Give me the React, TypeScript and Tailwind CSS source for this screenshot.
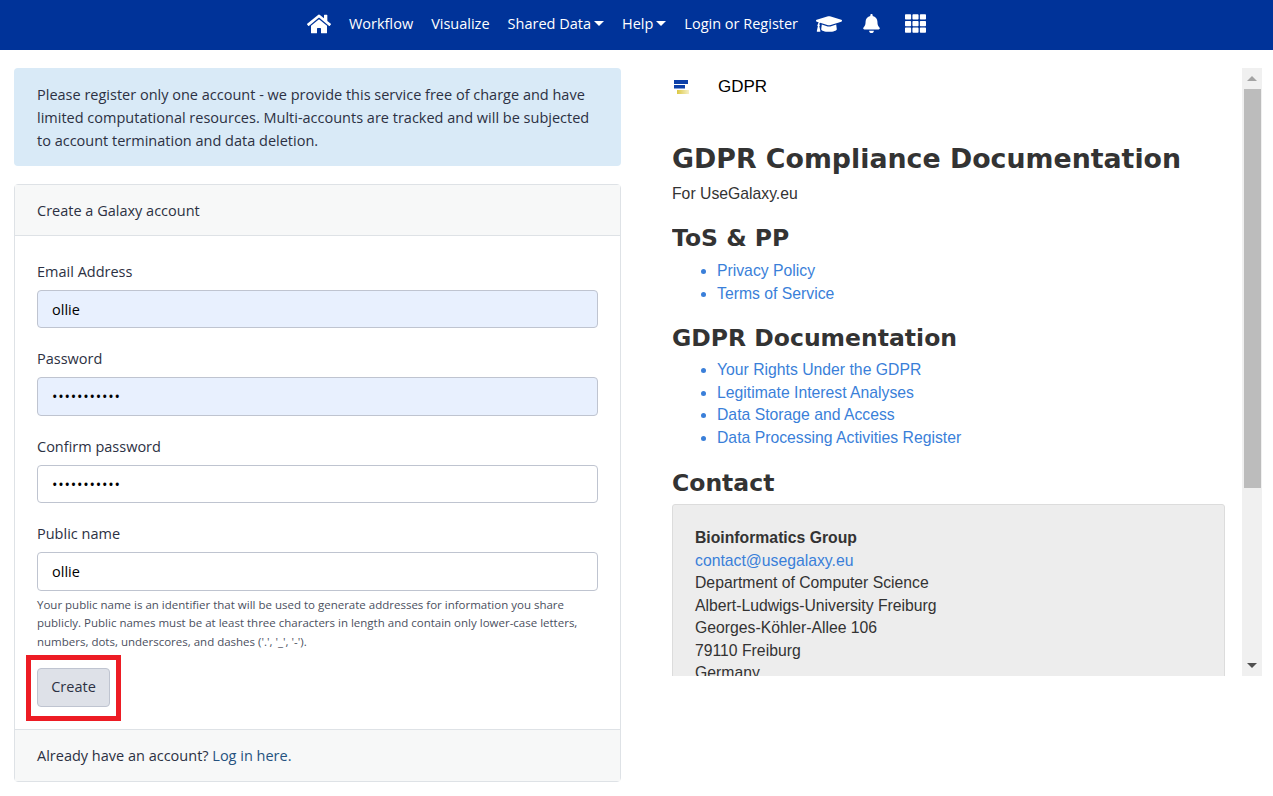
import { FaHome, FaGraduationCap, FaBell, FaTh } from 'react-icons/fa';

const sans = 'font-["Open_Sans",sans-serif]';

const Caret = () => (
  <span className="ml-[3px] inline-block align-[3px] border-x-[5px] border-t-[5px] border-x-transparent border-t-white" />
);

const Field = ({ label, value, type = 'text', filled = false, last = false }: { label: string; value: string; type?: string; filled?: boolean; last?: boolean }) => (
  <div className={last ? '' : 'mb-[15px]'}>
    <label className="block h-[34px] pt-[4px] text-[14.5px] leading-[23px] text-[#2c3143]">{label}</label>
    <input
      readOnly
      type={type}
      defaultValue={value}
      className={`block w-full h-[38.5px] px-[14px] pt-[1px] rounded-[4px] border border-[#bfc4d0] text-[14.5px] text-black outline-none ${type === 'password' ? 'tracking-[0.8px]' : ''} ${filled ? 'bg-[#e8f0fe]' : 'bg-white'}`}
    />
  </div>
);

const DocLink = ({ children }: { children: string }) => (
  <li className="leading-[22.5px] text-[#3a7fd9]">{children}</li>
);

export default function App() {
  return (
    <div className={`h-[796px] overflow-hidden bg-white ${sans}`}>
      <nav className="h-[50px] bg-[#003399] flex items-center justify-center gap-[18px] pb-[3px] pr-[40px] text-[14.5px] text-white">
        <FaHome size={24} />
        <span>Workflow</span>
        <span>Visualize</span>
        <span>Shared Data<Caret /></span>
        <span>Help<Caret /></span>
        <span>Login or Register</span>
        <FaGraduationCap size={26} />
        <FaBell size={19} className="mx-[2px]" />
        <FaTh size={21} className="ml-[4px]" />
      </nav>

      <main className="flex pl-[14px] pt-[18px] pr-[11px]">
        <section className="w-[607px] shrink-0">
          <div className="h-[98px] rounded-[4px] bg-[#d9eaf7] px-[23px] pt-[15px] text-[14.5px] leading-[23px] text-[#2c3143]">
            Please register only one account - we provide this service free of charge and have limited computational resources. Multi-accounts are tracked and will be subjected to account termination and data deletion.
          </div>

          <div className="relative mt-[18px] h-[598px] rounded-[4px] border border-[#dee2e6] flex flex-col">
            <div className="h-[51px] shrink-0 bg-[#f7f8f8] border-b border-[#dee2e6] px-[22px] pt-[2px] flex items-center text-[14.5px] text-[#2c3143]">
              Create a Galaxy account
            </div>
            <div className="flex-1 px-[22px] pt-[19.5px]">
              <Field label="Email Address" value="ollie" filled />
              <Field label="Password" value="ollieollie1" type="password" filled />
              <Field label="Confirm password" value="ollieollie1" type="password" />
              <Field label="Public name" value="ollie" last />
              <p className="mt-[5px] text-[11.5px] leading-[18.5px] text-[#4b5060]">
                Your public name is an identifier that will be used to generate addresses for information you share publicly. Public names must be at least three characters in length and contain only lower-case letters, numbers, dots, underscores, and dashes ('.', '_', '-').
              </p>
              <button className="mt-[16.5px] h-[39px] w-[73px] rounded-[4px] border border-[#bfc4d0] bg-[#dee1e8] text-[14.5px] text-[#2c3143]">
                Create
              </button>
            </div>
            <div className="h-[52px] shrink-0 bg-[#f7f8f8] border-t border-[#dee2e6] px-[22px] flex items-center text-[14.5px] text-[#2c3143]">
              Already have an account?&nbsp;<span className="text-[#25527f]">Log in here.</span>
            </div>
            <div className="absolute left-[11px] top-[470px] w-[95px] h-[66px] border-[5px] border-[#ed1c24]" />
          </div>
        </section>

        <section className="ml-[51px] flex-1 h-[608px] flex overflow-hidden font-['Liberation_Sans',sans-serif] text-[15.75px] text-[#333333]">
          <div className="flex-1 overflow-hidden">
            <div className="h-[38px] flex items-center text-black">
              <svg width="18" height="16" viewBox="0 0 18 16" className="ml-[1px]">
                <defs>
                  <linearGradient id="gdpr-logo-fade" x1="0" x2="1" y1="0" y2="0">
                    <stop offset="0" stopColor="#dcc843" />
                    <stop offset="1" stopColor="#f6f0c8" />
                  </linearGradient>
                </defs>
                <rect x="1" y="1" width="14" height="4" fill="#0b3fa8" />
                <rect x="1" y="6" width="11" height="3.5" fill="#0b3fa8" />
                <rect x="4" y="11" width="12" height="4" fill="url(#gdpr-logo-fade)" />
              </svg>
              <span className="ml-[27px] text-[17px]">GDPR</span>
            </div>
            <h1 className="mt-[36px] font-['DejaVu_Sans',sans-serif] font-bold text-[26.8px] leading-[34px]">GDPR Compliance Documentation</h1>
            <p className="mt-[7px] leading-[22px]">For UseGalaxy.eu</p>
            <h2 className="mt-[18px] font-['DejaVu_Sans',sans-serif] font-bold text-[23.5px] leading-[30px]">ToS &amp; PP</h2>
            <ul className="mt-[7px] pl-[45px] list-disc">
              <DocLink>Privacy Policy</DocLink>
              <DocLink>Terms of Service</DocLink>
            </ul>
            <h2 className="mt-[18px] font-['DejaVu_Sans',sans-serif] font-bold text-[23.5px] leading-[30px]">GDPR Documentation</h2>
            <ul className="mt-[6px] pl-[45px] list-disc">
              <DocLink>Your Rights Under the GDPR</DocLink>
              <DocLink>Legitimate Interest Analyses</DocLink>
              <DocLink>Data Storage and Access</DocLink>
              <DocLink>Data Processing Activities Register</DocLink>
            </ul>
            <h2 className="mt-[19px] font-['DejaVu_Sans',sans-serif] font-bold text-[23.5px] leading-[30px]">Contact</h2>
            <div className="mt-[6px] h-[200px] rounded-[3px] border border-[#dcdcdc] bg-[#ededed] px-[22px] pt-[22px] leading-[22.5px]">
              <div className="font-bold">Bioinformatics Group</div>
              <div className="text-[#3a7fd9]">contact@usegalaxy.eu</div>
              <div>Department of Computer Science</div>
              <div>Albert-Ludwigs-University Freiburg</div>
              <div>Georges-Köhler-Allee 106</div>
              <div>79110 Freiburg</div>
              <div>Germany</div>
            </div>
          </div>
          <div className="ml-[17px] w-[20px] shrink-0 bg-[#f0f0f0] flex flex-col items-center">
            <div className="h-[21px] flex items-center">
              <div className="border-x-[5px] border-b-[5px] border-x-transparent border-b-[#a3a3a3]" />
            </div>
            <div className="w-[17px] h-[399px] bg-[#bcbcbc]" />
            <div className="mt-auto h-[21px] flex items-center">
              <div className="border-x-[5px] border-t-[5px] border-x-transparent border-t-[#505050]" />
            </div>
          </div>
        </section>
      </main>
    </div>
  );
}
